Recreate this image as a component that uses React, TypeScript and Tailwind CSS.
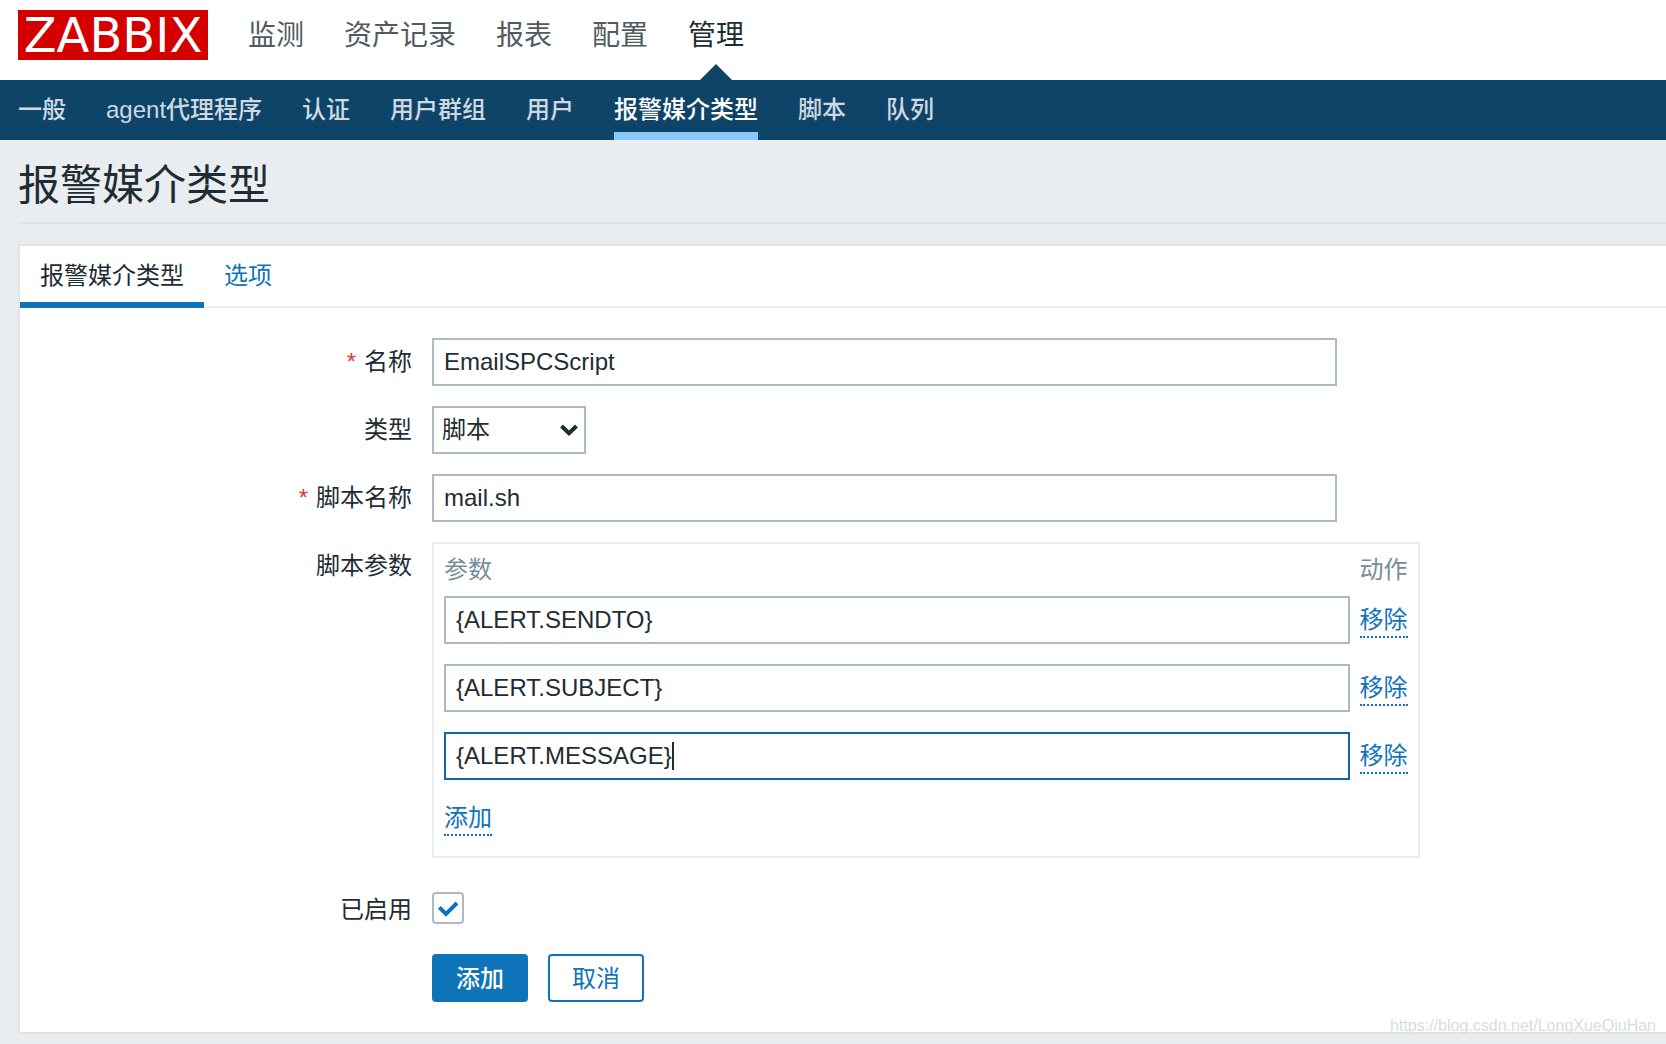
import React, { useState } from 'react';

const MAIN_MENU = ['监测', '资产记录', '报表', '配置', '管理'];
const SUB_MENU = ['一般', 'agent代理程序', '认证', '用户群组', '用户', '报警媒介类型', '脚本', '队列'];

const inputClass = 'block h-12 w-full border-2 bg-white px-2.5 text-[#1f2c33] outline-none focus:border-[#0f66a6]';
const dottedLink = 'border-b-2 border-dotted border-[#0f73b9] leading-8 text-[#0f73b9]';

interface FormRowProps {
    label?: string;
    htmlFor?: string;
    required?: boolean;
    className?: string;
    children: React.ReactNode;
}

const FormRow: React.FC<FormRowProps> = ({ label, htmlFor, required, className = '', children }) => (
    <div className={`flex gap-5 ${className}`}>
        <div className="w-98 shrink-0 pt-2 text-right leading-8">
            {label && (
                <label htmlFor={htmlFor}>
                    {required && <span className="mr-2 text-[#e33734]">*</span>}
                    {label}
                </label>
            )}
        </div>
        {children}
    </div>
);

const Header: React.FC = () => (
    <header>
        <div className="flex h-20 items-start bg-white pl-[18px]">
            <a href="#" className="mt-2.5 flex h-[50px] w-[190px] items-center justify-center bg-[#d40000] font-['DejaVu_Sans',sans-serif] text-5xl leading-none text-white">
                ZABBIX
            </a>
            <nav className="ml-10 flex h-20 gap-10 text-[28px]">
                {MAIN_MENU.map((item) => {
                    const active = item === '管理';
                    return (
                        <a key={item} href="#" className={`relative pt-4 leading-10 ${active ? 'text-[#1f2c33]' : 'text-[#4f5a61]'}`}>
                            {item}
                            {active && (
                                <svg viewBox="0 0 32 16" className="absolute bottom-0 left-1/2 h-4 w-8 -translate-x-1/2" aria-hidden="true">
                                    <path d="M0 16 16 0l16 16Z" fill="#0e4468" />
                                </svg>
                            )}
                        </a>
                    );
                })}
            </nav>
        </div>
        <nav className="flex h-[60px] gap-10 bg-[#0e4468] pl-[18px] font-medium">
            {SUB_MENU.map((item) => (
                <a
                    key={item}
                    href="#"
                    className={`border-b-8 pt-3 leading-9 ${item === '报警媒介类型' ? 'border-[#87c9f7] text-white' : 'border-transparent text-[#ced9e1]'}`}
                >
                    {item}
                </a>
            ))}
        </nav>
    </header>
);

const App: React.FC = () => {
    const [name, setName] = useState('EmailSPCScript');
    const [script, setScript] = useState('mail.sh');
    const [enabled, setEnabled] = useState(true);
    const [params, setParams] = useState(['{ALERT.SENDTO}', '{ALERT.SUBJECT}', '{ALERT.MESSAGE}']);

    const changeParam = (index: number, value: string) => setParams(params.map((p, i) => (i === index ? value : p)));
    const removeParam = (index: number) => setParams(params.filter((_, i) => i !== index));

    return (
        <div className="relative min-h-screen bg-[#e9edf0] pb-2.5 font-['Liberation_Sans','Noto_Sans_CJK_SC',sans-serif] text-2xl text-[#1f2c33]">
            <Header />
            <main className="pl-[18px]">
                <h1 className="mb-5 border-b-2 border-[#dfe4e7] pt-[18px] pb-2 text-[42px] leading-14">报警媒介类型</h1>
                <form className="border-y-2 border-l-2 border-[#dfe4e7] bg-white pb-[30px]" onSubmit={(e) => e.preventDefault()}>
                    <div className="flex h-[62px] border-b-2 border-[#e9edf0]">
                        <a href="#" className="-mb-0.5 border-b-6 border-[#0f73b9] px-5 pt-3 leading-9">报警媒介类型</a>
                        <a href="#" className="px-5 pt-3 leading-9 text-[#0f73b9]">选项</a>
                    </div>

                    <FormRow label="名称" htmlFor="name" required className="mt-[30px]">
                        <div className="w-[55%]">
                            <input id="name" className={`${inputClass} border-[#acbbc2]`} value={name} onChange={(e) => setName(e.target.value)} />
                        </div>
                    </FormRow>

                    <FormRow label="类型" htmlFor="type" className="mt-5">
                        <div className="relative w-[154px]">
                            <select id="type" className="h-12 w-full appearance-none border-2 border-[#acbbc2] bg-white px-2 outline-none">
                                <option>脚本</option>
                            </select>
                            <svg viewBox="0 0 18 12" className="pointer-events-none absolute top-[18px] right-2 h-3 w-[18px]" aria-hidden="true">
                                <path d="M1.5 2 9 9.2 16.500 2" fill="none" stroke="#1f2c33" strokeWidth="4" />
                            </svg>
                        </div>
                    </FormRow>

                    <FormRow label="脚本名称" htmlFor="script" required className="mt-5">
                        <div className="w-[55%]">
                            <input id="script" className={`${inputClass} border-[#acbbc2]`} value={script} onChange={(e) => setScript(e.target.value)} />
                        </div>
                    </FormRow>

                    <FormRow label="脚本参数" className="mt-5">
                        <div className="w-[60%] border-2 border-[#e9edf0] px-2.5 pb-5">
                            <table className="w-full">
                                <thead>
                                    <tr className="text-left leading-9 text-[#768d99]">
                                        <th className="pt-2 pb-2 font-normal">参数</th>
                                        <th className="w-12 pt-2 pb-2 font-normal">动作</th>
                                    </tr>
                                </thead>
                                <tbody>
                                    {params.map((param, i) => (
                                        <tr key={i}>
                                            <td className="pr-2.5 pb-5">
                                                <div className="relative">
                                                    <input
                                                        aria-label={`参数 ${i + 1}`}
                                                        className={`${inputClass} caret-transparent ${i === 2 ? 'border-[#0f66a6]' : 'border-[#acbbc2]'}`}
                                                        value={param}
                                                        onChange={(e) => changeParam(i, e.target.value)}
                                                    />
                                                    {i === 2 && (
                                                        <span className="pointer-events-none absolute top-2.5 left-3 flex h-7" aria-hidden="true">
                                                            <span className="invisible">{param}</span>
                                                            <span className="w-0.5 bg-[#1f2c33]" />
                                                        </span>
                                                    )}
                                                </div>
                                            </td>
                                            <td className="pb-5 align-top whitespace-nowrap">
                                                <button type="button" className={`mt-2 ${dottedLink}`} onClick={() => removeParam(i)}>移除</button>
                                            </td>
                                        </tr>
                                    ))}
                                </tbody>
                            </table>
                            <button type="button" className={`mt-0.5 ${dottedLink}`} onClick={() => setParams([...params, ''])}>添加</button>
                        </div>
                    </FormRow>

                    <FormRow label="已启用" htmlFor="enabled" className="mt-7">
                        <div className="relative mt-1.5 h-8 w-8">
                            <input
                                id="enabled"
                                type="checkbox"
                                className="block h-8 w-8 appearance-none rounded border-2 border-[#acbbc2] bg-white"
                                checked={enabled}
                                onChange={(e) => setEnabled(e.target.checked)}
                            />
                            {enabled && (
                                <svg viewBox="0 0 32 32" className="pointer-events-none absolute inset-0" aria-hidden="true">
                                    <path d="m7.300 15.300 6.700 6.700L25 11" fill="none" stroke="#0f73b9" strokeWidth="4" />
                                </svg>
                            )}
                        </div>
                    </FormRow>

                    <FormRow className="mt-7">
                        <button type="submit" className="h-12 w-24 rounded border-2 border-[#0f73b9] bg-[#0f73b9] pt-0.5 font-medium text-white">添加</button>
                        <button type="button" className="h-12 w-24 rounded border-2 border-[#0f73b9] bg-white pt-0.5 text-[#0f73b9]">取消</button>
                    </FormRow>
                </form>
            </main>
            <div className="pointer-events-none absolute right-2.5 bottom-2 text-base leading-5 text-[#d9dcde]">https://blog.csdn.net/LongXueQiuHan</div>
        </div>
    );
};

export default App;
